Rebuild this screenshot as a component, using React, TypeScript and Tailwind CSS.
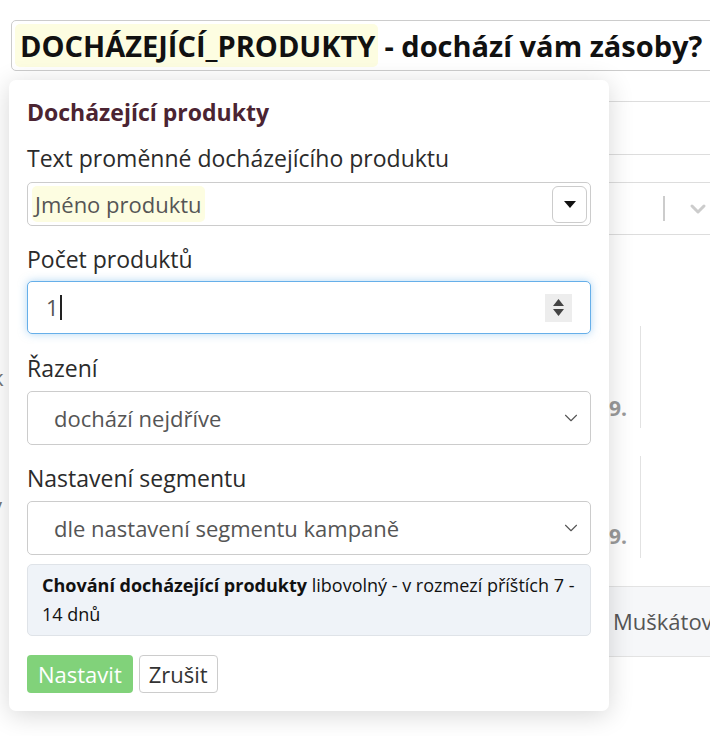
import { ChevronDown } from "lucide-react";

const font = { fontFamily: '"Open Sans", "Noto Sans", sans-serif' };

function Label({ children, className = "" }: { children: React.ReactNode; className?: string }) {
  return <div className={`text-[23px] leading-[28px] text-[#2b2b2b] ${className}`}>{children}</div>;
}

function SelectBox({ value }: { value: string }) {
  return (
    <div className="flex h-[54px] items-center justify-between rounded-[5px] border border-[#ccc] bg-white pl-[26px] pr-[8px]">
      <span className="text-[22px] text-[#555]">{value}</span>
      <ChevronDown size={22} strokeWidth={1.2} className="text-[#555]" />
    </div>
  );
}

function Popup() {
  return (
    <div className="absolute left-[9px] top-[80px] w-[600px] rounded-[7px] bg-white px-[18px] pt-[18px] pb-[18px] shadow-[0_4px_26px_rgba(0,0,0,0.16)]">
      <div className="text-[23px] font-bold leading-[28px] text-[#4b2432]">Docházející produkty</div>

      <Label className="mt-[18px]">Text proměnné docházejícího produktu</Label>
      <div className="mt-[10px] flex h-[44px] items-center justify-between rounded-[5px] border border-[#ccc] bg-white pl-[4px] pr-[3px]">
        <span className="flex h-[36px] items-center rounded-[5px] bg-[#fdfde1] px-[3px] text-[22px] text-[#555]">
          Jméno produktu
        </span>
        <span className="flex h-[37px] w-[35px] items-center justify-center rounded-[6px] border border-[#ccc] bg-white">
          <svg width="12" height="7" viewBox="0 0 12 7">
            <path d="M0 0h12L6 7z" fill="#111" />
          </svg>
        </span>
      </div>

      <Label className="mt-[19px]">Počet produktů</Label>
      <div className="mt-[8px] flex h-[53px] items-center justify-between rounded-[5px] border border-[#66afe9] bg-white pl-[18px] pr-[18px] shadow-[0_0_8px_rgba(102,175,233,0.5)]">
        <span className="flex items-center text-[22px] text-[#555]">
          1<span className="ml-[1px] inline-block h-[25px] w-[2px] bg-[#222]" />
        </span>
        <span className="flex h-[28px] w-[27px] flex-col items-center justify-center gap-[3px] bg-[#ededed]">
          <svg width="11" height="7" viewBox="0 0 11 7">
            <path d="M5.5 0L11 7H0z" fill="#444" />
          </svg>
          <svg width="11" height="7" viewBox="0 0 11 7">
            <path d="M0 0h11L5.5 7z" fill="#444" />
          </svg>
        </span>
      </div>

      <Label className="mt-[20px]">Řazení</Label>
      <div className="mt-[9px]">
        <SelectBox value="dochází nejdříve" />
      </div>

      <Label className="mt-[19px]">Nastavení segmentu</Label>
      <div className="mt-[9px]">
        <SelectBox value="dle nastavení segmentu kampaně" />
      </div>

      <div className="mt-[9px] rounded-[5px] border border-[#dfe3e8] bg-[#eff3f8] px-[14px] py-[6px] text-[18px] leading-[29px] text-[#111]">
        <b>Chování docházející produkty</b> libovolný - v rozmezí příštích 7 - 14 dnů
      </div>

      <div className="mt-[19px] flex gap-[6px]">
        <button className="h-[38px] rounded-[4px] bg-[#81d27a] px-[11px] text-[22px] text-white">Nastavit</button>
        <button className="h-[38px] rounded-[4px] border border-[#ccc] bg-white px-[9px] text-[22px] text-[#333]">
          Zrušit
        </button>
      </div>
    </div>
  );
}

export default function App() {
  return (
    <div className="relative h-[736px] w-[710px] overflow-hidden bg-white" style={font}>
      {/* field behind the popup */}
      <div className="ml-[11px] mt-[20px] flex h-[51px] w-[740px] items-center rounded-[5px] border border-[#ccc] bg-white pl-[3px]">
        <span className="flex h-[43px] items-center rounded-[5px] bg-[#fdfde1] pl-[5px] pr-[3px] text-[29px] font-bold text-[#111]">
          DOCHÁZEJÍCÍ_PRODUKTY
        </span>
        <span className="ml-[6px] whitespace-nowrap text-[29px] font-bold text-[#111]">- dochází vám zásoby?</span>
      </div>

      <div className="flex">
        {/* left edge letters */}
        <div className="w-[609px] text-[22px] text-[#777]">
          <div className="-ml-[8px] mt-[292px] leading-[28px]">k</div>
          <div className="-ml-[9px] mt-[100px] leading-[28px]">y</div>
        </div>

        {/* right side of the table */}
        <div className="w-[101px] shrink-0">
          <div className="mt-[30px] h-[53px] border-t border-[#ddd]" />
          <div className="h-[28px] border-t border-[#ddd]" />
          <div className="flex h-[53px] items-center border-y border-[#ddd] pl-[54px]">
            <span className="h-[25px] w-[2px] bg-[#ccc]" />
            <ChevronDown size={24} strokeWidth={3} className="ml-[21px] text-[#ccc]" />
          </div>

          <div className="mt-[91px] flex h-[102px]">
            <div className="flex w-[31px] items-end pb-[4px] text-[21px] font-bold text-[#9a9a9a]">9.</div>
            <div className="w-px bg-[#e2e2e2]" />
          </div>
          <div className="mt-[28px] flex h-[102px]">
            <div className="flex w-[31px] items-end pb-[6px] text-[21px] font-bold text-[#9a9a9a]">9.</div>
            <div className="w-px bg-[#e2e2e2]" />
          </div>

          <div className="mt-[28px] flex h-[71px] items-center border-y border-[#e3e3e3] bg-[#f6f7f9] pl-[4px]">
            <span className="whitespace-nowrap text-[22px] text-[#555]">Muškátový</span>
          </div>
        </div>
      </div>

      <Popup />
    </div>
  );
}
